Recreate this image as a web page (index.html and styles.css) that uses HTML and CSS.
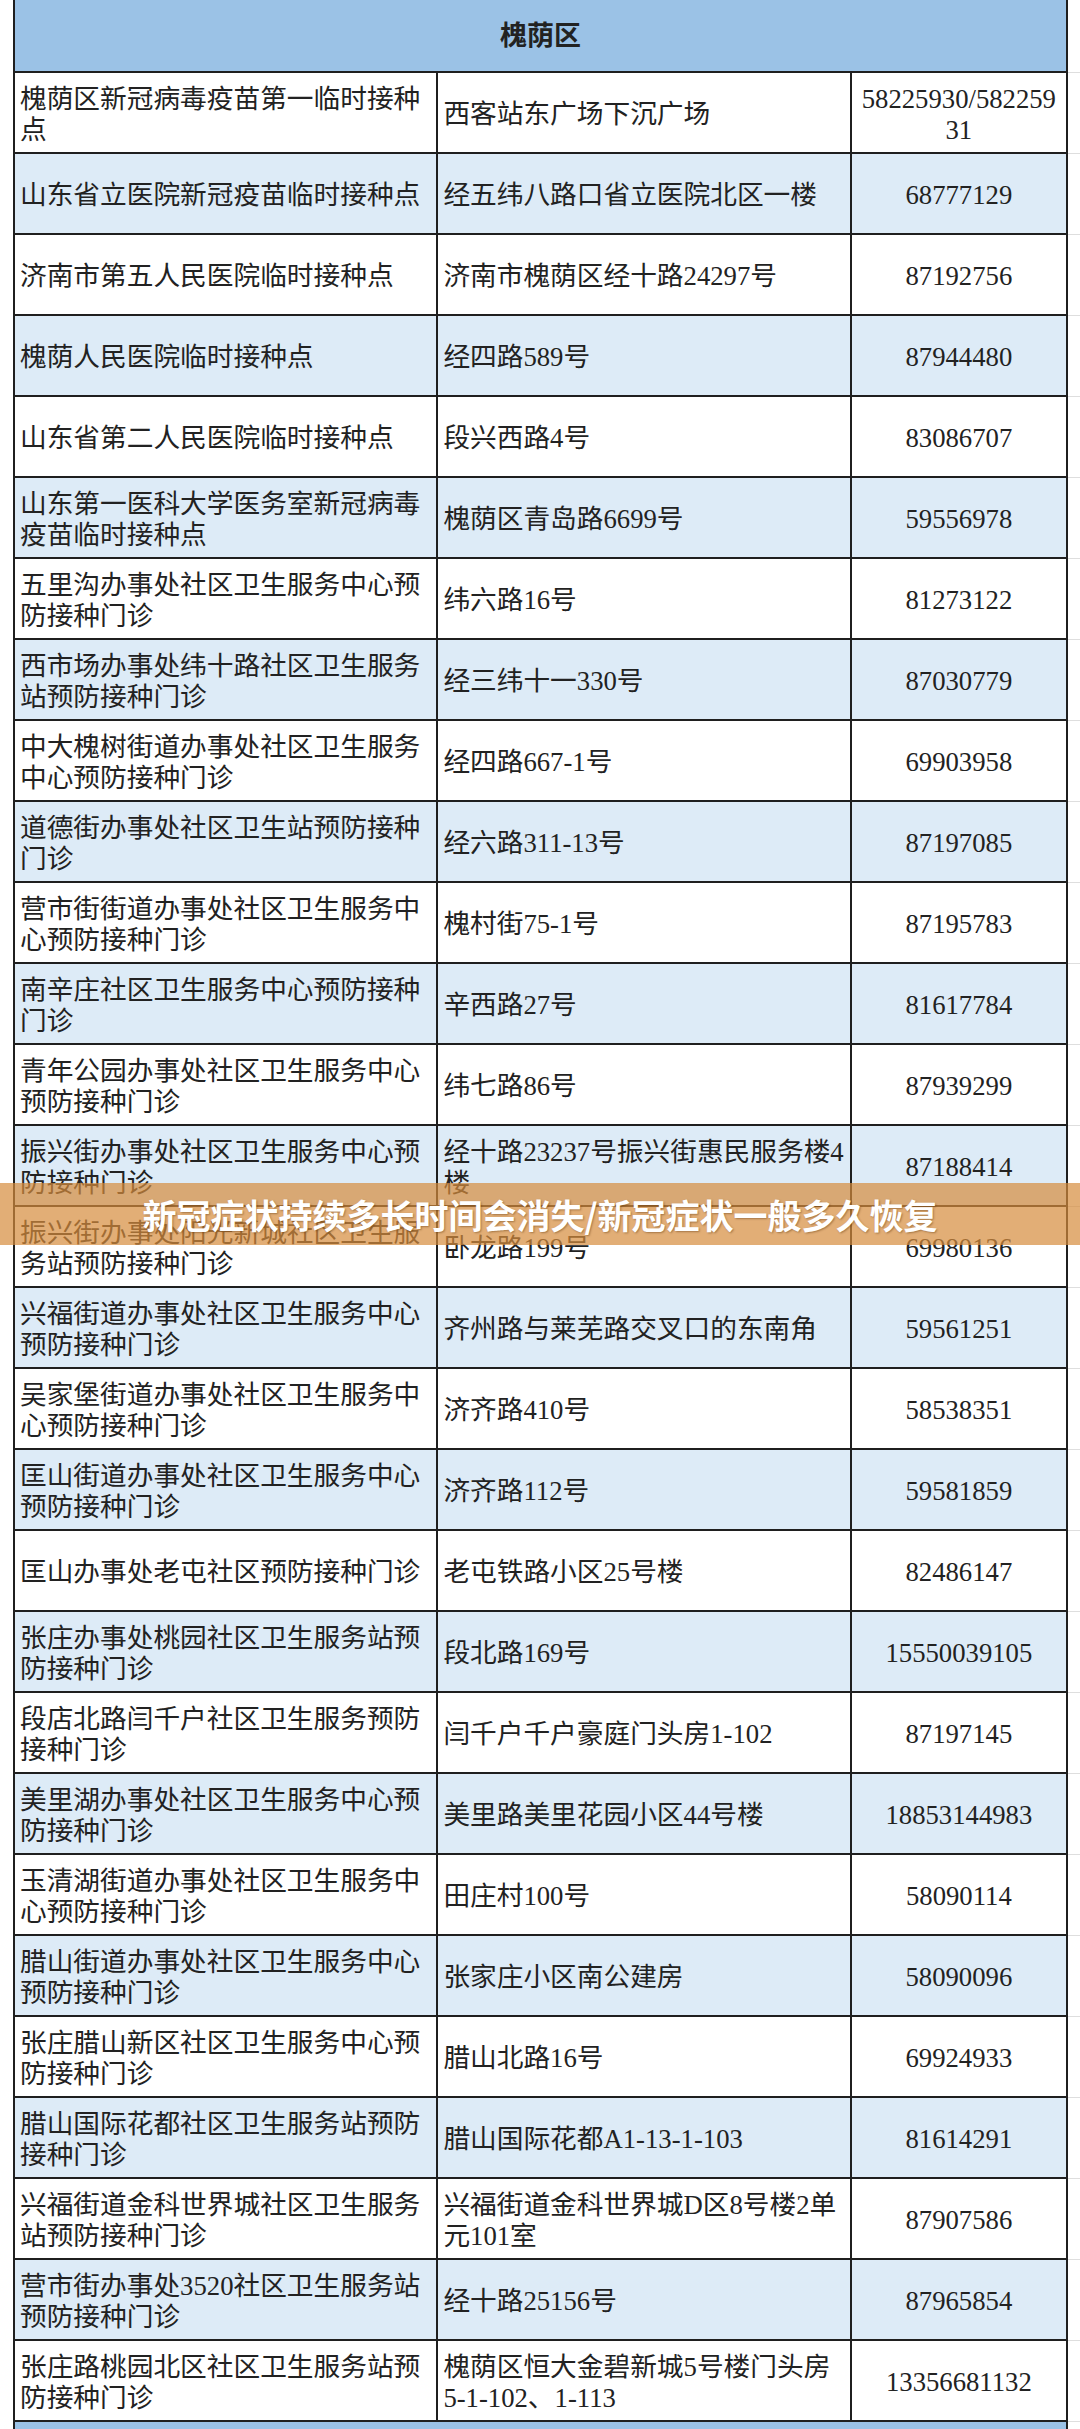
FILE: index.html
```html
<!DOCTYPE html>
<html lang="zh-CN">
<head>
<meta charset="utf-8">
<title>槐荫区新冠疫苗接种点</title>
<link rel="stylesheet" href="styles.css">
</head>
<body>
<table class="sheet">
  <colgroup>
    <col class="c-name"><col class="c-addr"><col class="c-tel"><col class="c-gap">
  </colgroup>
  <tr class="head"><th colspan="3">槐荫区</th><td class="gap"></td></tr>
  <tr><td>槐荫区新冠病毒疫苗第一临时接种点</td><td>西客站东广场下沉广场</td><td class="tel">58225930/58225931</td><td class="gap"></td></tr>
  <tr class="alt"><td>山东省立医院新冠疫苗临时接种点</td><td>经五纬八路口省立医院北区一楼</td><td class="tel">68777129</td><td class="gap"></td></tr>
  <tr><td>济南市第五人民医院临时接种点</td><td>济南市槐荫区经十路24297号</td><td class="tel">87192756</td><td class="gap"></td></tr>
  <tr class="alt"><td>槐荫人民医院临时接种点</td><td>经四路589号</td><td class="tel">87944480</td><td class="gap"></td></tr>
  <tr><td>山东省第二人民医院临时接种点</td><td>段兴西路4号</td><td class="tel">83086707</td><td class="gap"></td></tr>
  <tr class="alt"><td>山东第一医科大学医务室新冠病毒疫苗临时接种点</td><td>槐荫区青岛路6699号</td><td class="tel">59556978</td><td class="gap"></td></tr>
  <tr><td>五里沟办事处社区卫生服务中心预防接种门诊</td><td>纬六路16号</td><td class="tel">81273122</td><td class="gap"></td></tr>
  <tr class="alt"><td>西市场办事处纬十路社区卫生服务站预防接种门诊</td><td>经三纬十一330号</td><td class="tel">87030779</td><td class="gap"></td></tr>
  <tr><td>中大槐树街道办事处社区卫生服务中心预防接种门诊</td><td>经四路667-1号</td><td class="tel">69903958</td><td class="gap"></td></tr>
  <tr class="alt"><td>道德街办事处社区卫生站预防接种门诊</td><td>经六路311-13号</td><td class="tel">87197085</td><td class="gap"></td></tr>
  <tr><td>营市街街道办事处社区卫生服务中心预防接种门诊</td><td>槐村街75-1号</td><td class="tel">87195783</td><td class="gap"></td></tr>
  <tr class="alt"><td>南辛庄社区卫生服务中心预防接种门诊</td><td>辛西路27号</td><td class="tel">81617784</td><td class="gap"></td></tr>
  <tr><td>青年公园办事处社区卫生服务中心预防接种门诊</td><td>纬七路86号</td><td class="tel">87939299</td><td class="gap"></td></tr>
  <tr class="alt"><td>振兴街办事处社区卫生服务中心预防接种门诊</td><td>经十路23237号振兴街惠民服务楼4楼</td><td class="tel">87188414</td><td class="gap"></td></tr>
  <tr><td>振兴街办事处阳光新城社区卫生服务站预防接种门诊</td><td>卧龙路199号</td><td class="tel">69980136</td><td class="gap"></td></tr>
  <tr class="alt"><td>兴福街道办事处社区卫生服务中心预防接种门诊</td><td>齐州路与莱芜路交叉口的东南角</td><td class="tel">59561251</td><td class="gap"></td></tr>
  <tr><td>吴家堡街道办事处社区卫生服务中心预防接种门诊</td><td>济齐路410号</td><td class="tel">58538351</td><td class="gap"></td></tr>
  <tr class="alt"><td>匡山街道办事处社区卫生服务中心预防接种门诊</td><td>济齐路112号</td><td class="tel">59581859</td><td class="gap"></td></tr>
  <tr><td>匡山办事处老屯社区预防接种门诊</td><td>老屯铁路小区25号楼</td><td class="tel">82486147</td><td class="gap"></td></tr>
  <tr class="alt"><td>张庄办事处桃园社区卫生服务站预防接种门诊</td><td>段北路169号</td><td class="tel">15550039105</td><td class="gap"></td></tr>
  <tr><td>段店北路闫千户社区卫生服务预防接种门诊</td><td>闫千户千户豪庭门头房1-102</td><td class="tel">87197145</td><td class="gap"></td></tr>
  <tr class="alt"><td>美里湖办事处社区卫生服务中心预防接种门诊</td><td>美里路美里花园小区44号楼</td><td class="tel">18853144983</td><td class="gap"></td></tr>
  <tr><td>玉清湖街道办事处社区卫生服务中心预防接种门诊</td><td>田庄村100号</td><td class="tel">58090114</td><td class="gap"></td></tr>
  <tr class="alt"><td>腊山街道办事处社区卫生服务中心预防接种门诊</td><td>张家庄小区南公建房</td><td class="tel">58090096</td><td class="gap"></td></tr>
  <tr><td>张庄腊山新区社区卫生服务中心预防接种门诊</td><td>腊山北路16号</td><td class="tel">69924933</td><td class="gap"></td></tr>
  <tr class="alt"><td>腊山国际花都社区卫生服务站预防接种门诊</td><td>腊山国际花都A1-13-1-103</td><td class="tel">81614291</td><td class="gap"></td></tr>
  <tr><td>兴福街道金科世界城社区卫生服务站预防接种门诊</td><td>兴福街道金科世界城D区8号楼2单元101室</td><td class="tel">87907586</td><td class="gap"></td></tr>
  <tr class="alt"><td>营市街办事处3520社区卫生服务站预防接种门诊</td><td>经十路25156号</td><td class="tel">87965854</td><td class="gap"></td></tr>
  <tr><td>张庄路桃园北区社区卫生服务站预防接种门诊</td><td>槐荫区恒大金碧新城5号楼门头房5-1-102、1-113</td><td class="tel">13356681132</td><td class="gap"></td></tr>
  <tr class="head"><th colspan="3"></th><td class="gap"></td></tr>
</table>
<div class="banner">新冠症状持续多长时间会消失/新冠症状一般多久恢复</div>
</body>
</html>
```

FILE: styles.css
```css
html, body {
  margin: 0;
  padding: 0;
  background: #ffffff;
}

body {
  position: relative;
  width: 1080px;
  overflow: hidden;
  font-family: "Liberation Serif", "Noto Sans CJK SC", serif;
  color: #222222;
}

.sheet {
  border-collapse: collapse;
  table-layout: fixed;
  width: 1067px;
  margin-left: 13px;
  font-size: 26.7px;
  line-height: 31px;
}

.c-name { width: 423px; }
.c-addr { width: 413px; }
.c-tel { width: 216px; }
.c-gap { width: 13px; }

.sheet tr { height: 81px; }

.sheet td {
  border: 2px solid #1f1f1f;
  padding: 4px 0 0 5px;
  vertical-align: middle;
  text-align: left;
  font-weight: normal;
}

.sheet tr.alt td:not(.gap) {
  background: #ddebf7;
}

.sheet td.tel {
  text-align: center;
  padding: 4px 5px 0 5px;
  word-break: break-all;
}

.sheet td.gap {
  background: #ffffff;
  border-top: 1px solid #dedede;
  border-bottom: 1px solid #dedede;
  border-right: none;
  padding: 0;
}

.sheet tr.head { height: 72px; }

.sheet tr.head th {
  background: #9bc2e6;
  border: 2px solid #1f1f1f;
  border-top: none;
  font-family: "Noto Sans CJK SC", sans-serif;
  font-weight: bold;
  font-size: 27px;
  text-align: center;
  vertical-align: middle;
  padding: 0 0 4px 0;
}

.sheet tr.head td.gap {
  border-top: none;
}

.banner {
  position: absolute;
  left: 0;
  top: 1183px;
  width: 1080px;
  height: 62px;
  background: rgba(214, 140, 60, 0.7);
  display: flex;
  align-items: center;
  justify-content: center;
  color: #ffffff;
  font-family: "Noto Sans CJK SC", sans-serif;
  font-weight: bold;
  font-size: 34px;
  text-shadow: 1px 1px 2px rgba(90, 50, 10, 0.45);
  white-space: nowrap;
}
```
